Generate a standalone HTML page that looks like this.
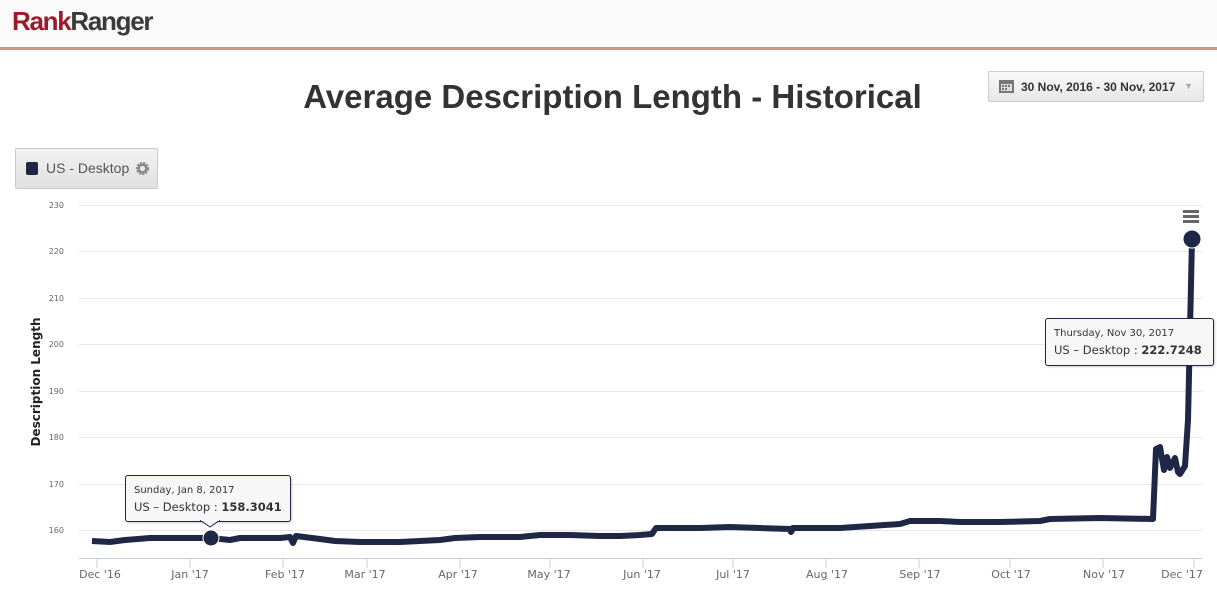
<!DOCTYPE html>
<html><head><meta charset="utf-8"><style>
body{margin:0;width:1217px;height:589px;background:#fff;font-family:"Liberation Sans",sans-serif;overflow:hidden;position:relative}
.hdr{position:absolute;left:0;top:0;width:1217px;height:47px;background:#fafafa;border-bottom:3px solid #e38b8b}
.logo{position:absolute;left:12px;top:6px;font-size:26px;font-weight:bold;letter-spacing:-1.3px}
.title{position:absolute;left:0;width:1225px;top:78px;text-align:center;font-size:33px;font-weight:bold;color:#333}
.date{position:absolute;left:988px;top:71px;width:214px;height:29px;border:1px solid #ccc;border-radius:2px;background:linear-gradient(#fafafa,#e6e6e6);font-size:12px;font-weight:bold;color:#333}
.leg{position:absolute;left:15px;top:148px;width:141px;height:39px;border:1px solid #ccc;border-radius:2px;background:linear-gradient(#f2f2f2,#e0e0e0);font-size:14px;color:#555}
.tt{position:absolute;background:#f7f7f7;border:1px solid #1e2846;border-radius:3px;font-family:"DejaVu Sans",sans-serif;color:#333;box-shadow:1px 1px 2px rgba(0,0,0,.2)}
</style></head><body>
<div class="hdr"><div class="logo"><span style="color:#9b1b2a">Rank</span><span style="color:#3a3a3a">Ranger</span></div></div>
<div class="title">Average Description Length - Historical</div>
<div class="date"><svg style="position:absolute;left:10px;top:8px" width="15" height="13"><rect width="15" height="13" fill="#777"/><rect x="2" y="4" width="11" height="7" fill="#ddd"/><g fill="#777"><rect x="3" y="5" width="2" height="2"/><rect x="6" y="5" width="2" height="2"/><rect x="9" y="5" width="2" height="2"/><rect x="3" y="8" width="2" height="2"/><rect x="6" y="8" width="2" height="2"/></g></svg><span style="position:absolute;left:32px;top:8px">30 Nov, 2016 - 30 Nov, 2017</span><span style="position:absolute;right:10px;top:9px;color:#aaa;font-size:9px">▼</span></div>
<div class="leg"><span style="position:absolute;left:10px;top:13px;width:12px;height:13px;background:#1e2846;border-radius:2px"></span><span style="position:absolute;left:30px;top:11px">US - Desktop</span><svg style="position:absolute;left:119px;top:12px" width="15" height="15" viewBox="0 0 16 16"><circle cx="8" cy="8" r="5.5" fill="none" stroke="#888" stroke-width="3" stroke-dasharray="2.2 1.1"/><circle cx="8" cy="8" r="4" fill="none" stroke="#888" stroke-width="2.5"/></svg></div>
<svg style="position:absolute;left:0;top:0" width="1217" height="589">
<g stroke="#e6e6e6" stroke-width="1">
<line x1="79" x2="1202" y1="205.5" y2="205.5"/><line x1="79" x2="1202" y1="251.5" y2="251.5"/><line x1="79" x2="1202" y1="298.5" y2="298.5"/><line x1="79" x2="1202" y1="344.5" y2="344.5"/><line x1="79" x2="1202" y1="391.5" y2="391.5"/><line x1="79" x2="1202" y1="437.5" y2="437.5"/><line x1="79" x2="1202" y1="484.5" y2="484.5"/><line x1="79" x2="1202" y1="530.5" y2="530.5"/></g>
<line x1="79" x2="1202" y1="558.5" y2="558.5" stroke="#c0d0e0"/>
<g stroke="#c0d0e0"><line x1="97" x2="97" y1="558" y2="568"/><line x1="190" x2="190" y1="558" y2="568"/><line x1="283" x2="283" y1="558" y2="568"/><line x1="367" x2="367" y1="558" y2="568"/><line x1="460" x2="460" y1="558" y2="568"/><line x1="550" x2="550" y1="558" y2="568"/><line x1="643" x2="643" y1="558" y2="568"/><line x1="733" x2="733" y1="558" y2="568"/><line x1="826" x2="826" y1="558" y2="568"/><line x1="919" x2="919" y1="558" y2="568"/><line x1="1010" x2="1010" y1="558" y2="568"/><line x1="1103" x2="1103" y1="558" y2="568"/><line x1="1194" x2="1194" y1="558" y2="568"/></g>
<g font-family="DejaVu Sans,sans-serif" font-size="8" fill="#666" text-anchor="end"><text x="64" y="208">230</text><text x="64" y="254">220</text><text x="64" y="301">210</text><text x="64" y="347">200</text><text x="64" y="394">190</text><text x="64" y="440">180</text><text x="64" y="487">170</text><text x="64" y="533">160</text></g>
<text transform="translate(40,382) rotate(-90)" text-anchor="middle" font-family="DejaVu Sans,sans-serif" font-size="12" font-weight="bold" fill="#222">Description Length</text>
<g font-family="DejaVu Sans,sans-serif" font-size="11" fill="#666" text-anchor="middle"><text x="100" y="578">Dec '16</text><text x="190" y="578">Jan '17</text><text x="285" y="578">Feb '17</text><text x="365" y="578">Mar '17</text><text x="458" y="578">Apr '17</text><text x="549" y="578">May '17</text><text x="642" y="578">Jun '17</text><text x="733" y="578">Jul '17</text><text x="827" y="578">Aug '17</text><text x="920" y="578">Sep '17</text><text x="1011" y="578">Oct '17</text><text x="1104" y="578">Nov '17</text><text x="1182" y="578">Dec '17</text></g>
<polyline fill="none" stroke="#1e2846" stroke-width="6" stroke-linejoin="round" points="92,541 110,542 125,540 150,538 180,538 211,538 230,540 240,538 280,538 290,537 293,543 296,536 320,539 335,541 360,542 400,542 440,540 455,538 480,537 520,537 540,535 570,535 600,536 620,536 640,535 652,534 656,528 700,528 730,527 760,528 790,529 791,532 793,528 840,528 870,526 900,524 910,521 940,521 960,522 1000,522 1040,521 1050,519 1100,518 1153,519 1156,449 1160,447 1164,470 1167,457 1170,468 1175,458 1178,472 1180,474 1185,466 1188,420 1190,330 1192,239"/>
<circle cx="211" cy="538" r="8" fill="#1e2846" stroke="#fff" stroke-width="1"/>
<circle cx="1192" cy="239" r="9" fill="#1e2846" stroke="#fff" stroke-width="1"/>
<g fill="#666"><rect x="1183" y="210" width="16" height="3"/><rect x="1183" y="215" width="16" height="3"/><rect x="1183" y="220" width="16" height="3"/></g>
</svg>
<div class="tt" style="left:125px;top:475px;width:164px;height:45px"><div style="position:absolute;left:8px;top:9px;font-size:10px">Sunday, Jan 8, 2017</div><div style="position:absolute;left:8px;top:24px;font-size:11.5px">US – Desktop : <b>158.3041</b></div></div>
<svg style="position:absolute;left:200px;top:520px" width="20" height="8"><path d="M0 0 L10 7 L20 0" fill="#f7f7f7" stroke="#1e2846"/><rect x="1" y="-1" width="18" height="2" fill="#f7f7f7"/></svg>
<div class="tt" style="left:1045px;top:318px;width:167px;height:46px"><div style="position:absolute;left:8px;top:9px;font-size:10px">Thursday, Nov 30, 2017</div><div style="position:absolute;left:8px;top:24px;font-size:11.5px">US – Desktop : <b>222.7248</b></div></div>
</body></html>
